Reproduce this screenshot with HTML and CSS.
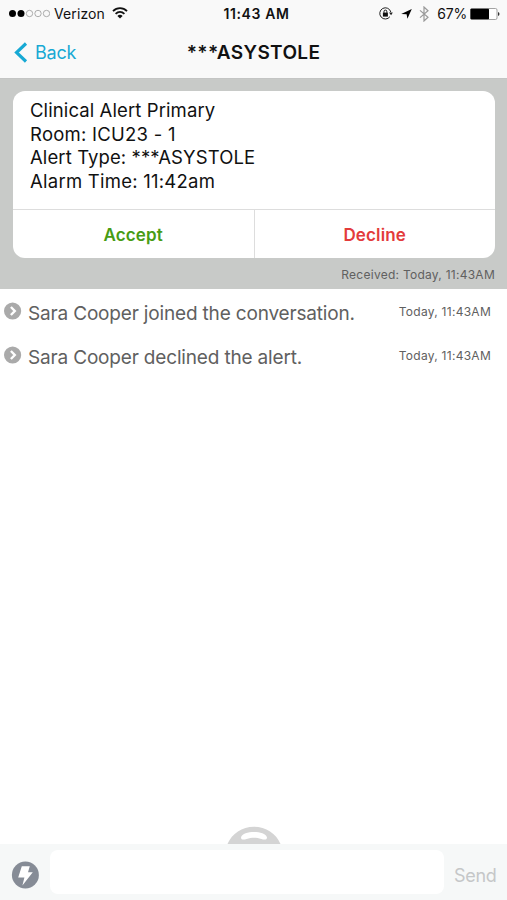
FILE: index.html
```
<!DOCTYPE html>
<html lang="en">
<head>
    <meta charset="UTF-8">
    <meta name="viewport" content="width=device-width, initial-scale=1.0">
    <title>***ASYSTOLE</title>
    <link rel="stylesheet" href="styles.css">
</head>
<body>
    <div class="app">
        <header class="header">
            <div class="status-bar">
                <div class="status-left">
                    <svg class="signal" width="42" height="10" viewBox="0 0 42 10">
                        <circle cx="4.5" cy="4.5" r="3.5" fill="#000"/>
                        <circle cx="13" cy="4.5" r="3.5" fill="#000"/>
                        <g fill="none" stroke="#999" stroke-width="0.8">
                            <circle cx="21.5" cy="4.5" r="3.2"/>
                            <circle cx="30" cy="4.5" r="3.2"/>
                            <circle cx="38.5" cy="4.5" r="3.2"/>
                        </g>
                    </svg>
                    <span class="carrier">Verizon</span>
                    <svg class="wifi" width="16" height="12" viewBox="0 0 16 12">
                        <g fill="none" stroke="#111" stroke-width="1.8">
                            <path d="M1 4.2C5 0.2 11 0.2 15 4.2"/>
                            <path d="M3.6 6.8C6.2 4.3 9.8 4.3 12.4 6.8"/>
                        </g>
                        <path d="M8 11.5L5.4 8.9C6.9 7.5 9.1 7.5 10.6 8.9Z" fill="#111"/>
                    </svg>
                </div>
                <span class="clock">11:43 AM</span>
                <div class="status-right">
                    <svg class="lock" width="14" height="13" viewBox="0 0 14 13">
                        <path d="M10.9 9.7A5.6 5.6 0 1 1 11.8 5" fill="none" stroke="#222" stroke-width="1"/>
                        <path d="M10 5.6H13.8L12.1 8.2Z" fill="#222"/>
                        <rect x="3.9" y="5.6" width="5" height="4" fill="#111"/>
                        <path d="M5 5.8V4.5A1.4 1.4 0 0 1 7.8 4.5V5.8" fill="none" stroke="#111" stroke-width="1"/>
                    </svg>
                    <svg class="location" width="11" height="10" viewBox="0 0 11 10">
                        <path d="M10.8 0L6.4 9.8L5.6 5.3L0.2 4.9Z" fill="#000"/>
                    </svg>
                    <svg class="bluetooth" width="10" height="16" viewBox="0 0 10 16">
                        <path d="M1 4.4L9 11.2L5 15V1L9 4.8L1 11.6" fill="none" stroke="#999" stroke-width="1.2"/>
                    </svg>
                    <span class="percent">67%</span>
                    <svg class="battery" width="30" height="12" viewBox="0 0 30 12">
                        <rect x="0.5" y="0.5" width="26.5" height="11" rx="1.5" fill="#fff" stroke="#999" stroke-width="0.9"/>
                        <rect x="0.5" y="0.8" width="18.5" height="10.4" rx="0.8" fill="#000"/>
                        <path d="M28 4V8Q29.5 7.6 29.5 6T28 4Z" fill="#333"/>
                    </svg>
                </div>
            </div>
            <div class="nav-bar">
                <a class="back">
                    <svg width="14" height="21" viewBox="0 0 14 21">
                        <path d="M12 1.5L2.5 10.5L12 19.5" fill="none" stroke="#17a9d4" stroke-width="3.1"/>
                    </svg>
                    <span class="back-label">Back</span>
                </a>
                <h1 class="title">***ASYSTOLE</h1>
            </div>
        </header>

        <section class="alert-panel">
            <div class="alert-card">
                <div class="alert-body">
                    <p class="line-sender">Clinical Alert Primary</p>
                    <p class="line-room">Room: ICU23 - 1</p>
                    <p class="line-type">Alert Type: ***ASYSTOLE</p>
                    <p class="line-time">Alarm Time: 11:42am</p>
                </div>
                <div class="alert-actions">
                    <button class="accept"><span>Accept</span></button>
                    <button class="decline"><span>Decline</span></button>
                </div>
            </div>
            <div class="received"><span>Received: Today, 11:43AM</span></div>
        </section>

        <main class="events">
            <div class="event">
                <svg class="event-icon" width="18" height="18" viewBox="0 0 18 18">
                    <circle cx="8.6" cy="9" r="8.6" fill="#aaa"/>
                    <path d="M6.9 5L10.8 9L6.9 13" fill="none" stroke="#fff" stroke-width="2.4"/>
                </svg>
                <span class="event-text">Sara Cooper joined the conversation.</span>
                <span class="event-time">Today, 11:43AM</span>
            </div>
            <div class="event">
                <svg class="event-icon" width="18" height="18" viewBox="0 0 18 18">
                    <circle cx="8.6" cy="9" r="8.6" fill="#aaa"/>
                    <path d="M6.9 5L10.8 9L6.9 13" fill="none" stroke="#fff" stroke-width="2.4"/>
                </svg>
                <span class="event-text">Sara Cooper declined the alert.</span>
                <span class="event-time">Today, 11:43AM</span>
            </div>
        </main>

        <svg class="watermark" width="56" height="18" viewBox="0 0 56 18">
            <path d="M0.5 18C5 7.5 15 0.8 27 0.8S49 7.5 53.5 18Z" fill="#d4d4d4"/>
            <path d="M14 11.5C15 7.5 21 6 27 6S39 7.5 40 11.5C40 14 37 14 34.5 13C29 11.4 25 11.4 19.5 13C17 14 14 14 14 11.5Z" fill="#fff"/>
        </svg>

        <footer class="composer">
            <svg class="quick" width="28" height="28" viewBox="0 0 28 28">
                <circle cx="14.4" cy="14" r="13.5" fill="#868c96"/>
                <path d="M10.8 5.2H18.8L17 11.2H21.8L11.4 24.6L13.4 16.4H7.2Z" fill="#fff"/>
            </svg>
            <input class="message" type="text">
            <span class="send">Send</span>
        </footer>
    </div>
</body>
</html>
```
FILE: styles.css
```
* {
    box-sizing: border-box;
}
body {
    margin: 0;
    font-family: Inter, "Liberation Sans", sans-serif;
    background-color: #fff;
    color: #111;
}
.app {
    display: flex;
    flex-direction: column;
    height: 900px;
}
.header {
    height: 79px;
    background-color: #f9f9f9;
    border-bottom: 1px solid #c4c5c4;
}
.status-bar {
    display: grid;
    grid-template-columns: 1fr auto 1fr;
    align-items: center;
    height: 28px;
    padding: 0 7px 0 8px;
    font-size: 14px;
    line-height: 28px;
}
.status-left,
.status-right {
    display: flex;
    align-items: center;
}
.status-right {
    justify-content: flex-end;
}
.signal,
.wifi,
.lock,
.location,
.bluetooth,
.battery {
    flex: none;
}
.signal {
    margin-bottom: 1px;
}
.carrier {
    margin-left: 4px;
    letter-spacing: 0.1px;
}
.wifi {
    margin: 0 0 2px 7px;
}
.clock {
    padding-left: 5px;
    font-weight: 600;
    letter-spacing: 0.6px;
}
.lock,
.location,
.bluetooth,
.battery {
    margin-bottom: 1px;
}
.location {
    margin-left: 8px;
}
.bluetooth {
    margin-left: 7px;
}
.percent {
    margin: 0 3px 0 8px;
    letter-spacing: -0.2px;
}
.nav-bar {
    display: grid;
    grid-template-columns: 1fr auto 1fr;
    align-items: center;
    height: 49px;
    padding: 0 14px;
}
.back {
    display: flex;
    align-items: center;
    gap: 7px;
    color: #17a9d4;
    font-size: 18px;
    letter-spacing: -0.2px;
}
.title {
    margin: 0;
    font-size: 19px;
    font-weight: 600;
    letter-spacing: 0.35px;
}
.alert-panel {
    height: 210px;
    padding: 12px 12px 0 13px;
    background-color: #c8cac8;
}
.alert-card {
    height: 167px;
    border-radius: 12px;
    background-color: #fff;
    overflow: hidden;
}
.alert-body {
    height: 118px;
    padding: 8px 17px;
}
.alert-body p {
    margin: 0;
    width: max-content;
    font-size: 18.5px;
    line-height: 23.5px;
    letter-spacing: 0.1px;
}
.alert-body .line-room,
.alert-body .line-time {
    letter-spacing: 0.25px;
}
.alert-actions {
    display: flex;
    height: 49px;
    border-top: 1px solid #ddd;
}
.alert-actions button {
    flex: 1;
    padding: 1px 0 0;
    border: none;
    background: none;
    font-family: inherit;
    font-size: 17px;
    font-weight: 600;
    letter-spacing: 0.15px;
}
.alert-actions .accept {
    border-right: 1px solid #ddd;
    color: #479c14;
}
.alert-actions .decline {
    color: #e33b3b;
}
.received {
    padding: 8px 0 0;
    font-size: 12px;
    line-height: 18px;
    text-align: right;
    letter-spacing: 0.26px;
    color: #606060;
}
.events {
    flex: 1;
    padding-top: 2px;
}
.event {
    display: flex;
    height: 44px;
    padding: 0 16px 0 4px;
    color: #606060;
}
.event-icon {
    margin-top: 11px;
}
.event-text {
    margin-left: 6px;
    font-size: 19px;
    line-height: 45px;
    letter-spacing: -0.17px;
}
.event-time {
    margin-left: auto;
    font-size: 12px;
    line-height: 41px;
    letter-spacing: 0.27px;
}
.watermark {
    display: block;
    margin-left: 227px;
}
.composer {
    display: flex;
    align-items: center;
    height: 56px;
    padding: 0 11px;
    background-color: #f6f8f8;
}
.quick {
    flex: none;
    margin-top: 6px;
}
.message {
    flex: none;
    width: 394px;
    height: 44px;
    margin: 0 10px 0 11px;
    border: none;
    border-radius: 8px;
    background-color: #fff;
}
.send {
    padding-top: 7px;
    color: #c5c7c8;
    font-size: 18px;
    letter-spacing: -0.3px;
}
```
